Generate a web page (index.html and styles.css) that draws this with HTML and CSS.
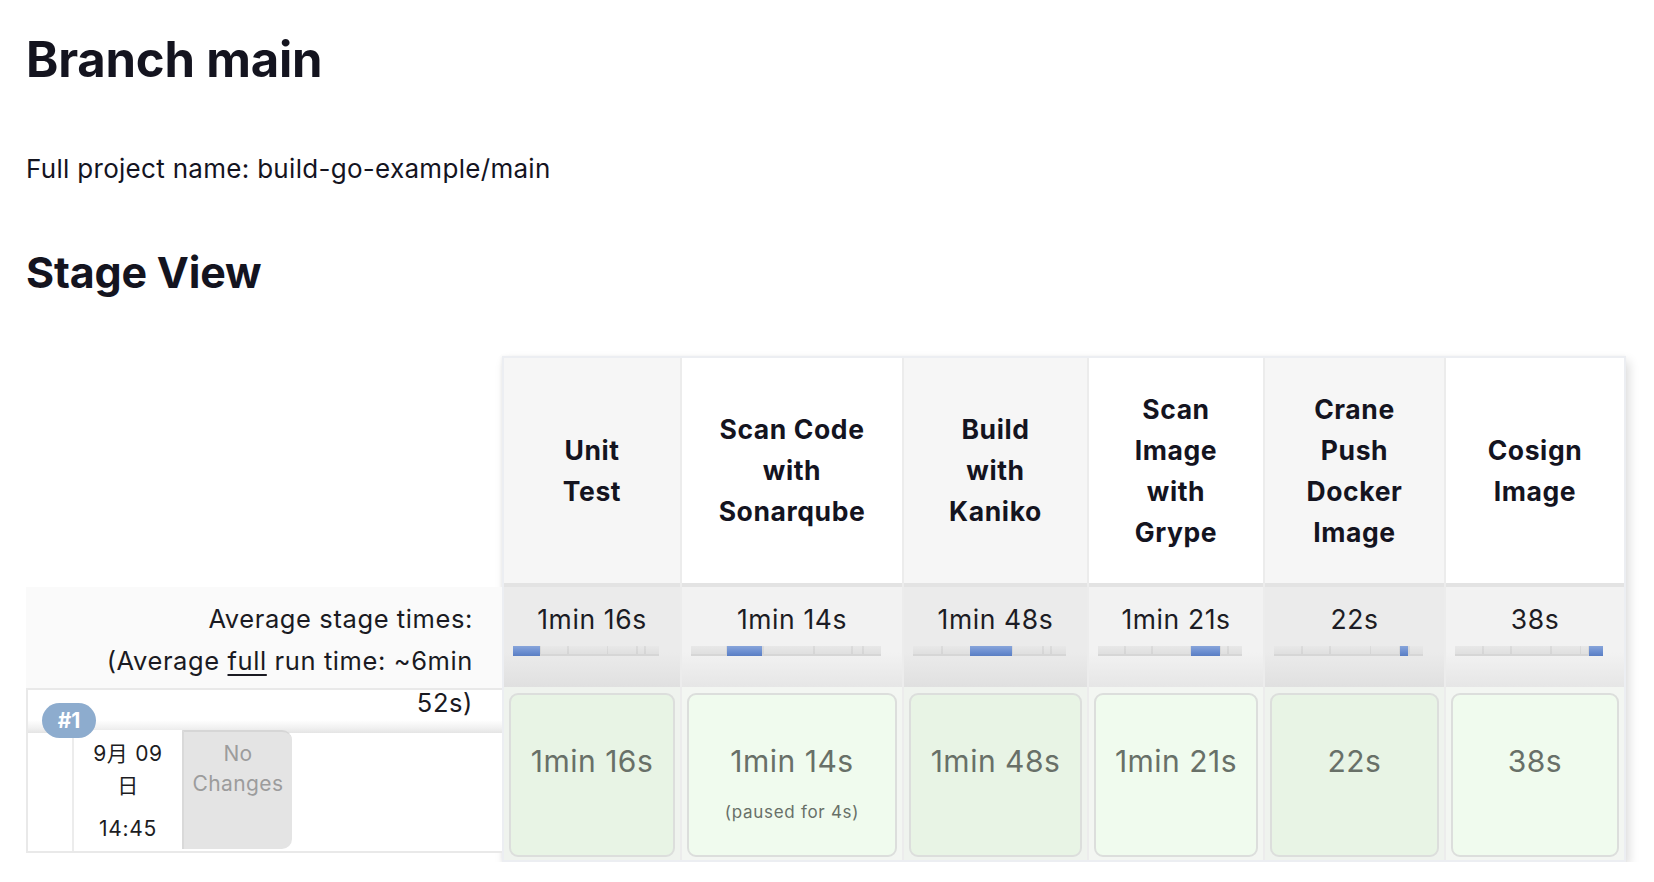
FILE: index.html
```html
<!DOCTYPE html>
<html lang="ja">
<head>
<meta charset="utf-8">
<title>Branch main</title>
<link rel="stylesheet" href="styles.css">
</head>
<body>
<div class="page">
  <h1 class="title">Branch main</h1>
  <p class="fullname">Full project name: build-go-example/main</p>
  <h2 class="section">Stage View</h2>

  <div class="stage-view">
    <div class="runs">
      <div class="runs-spacer"></div>
      <div class="avg-label">Average stage times:<br>(Average <u>full</u> run time: ~6min<br>52s)</div>
      <div class="run-row">
        <div class="run-head"></div>
        <span class="badge">#1</span>
        <div class="run-body">
          <div class="run-date">
            <div class="date-day">9月 09<br>日</div>
            <div class="date-time">14:45</div>
          </div>
          <div class="run-changes">No<br>Changes</div>
        </div>
      </div>
    </div>

    <div class="stages">
      <div class="stage-head odd">Unit<br>Test</div>
      <div class="stage-head">Scan Code<br>with<br>Sonarqube</div>
      <div class="stage-head odd">Build<br>with<br>Kaniko</div>
      <div class="stage-head">Scan<br>Image<br>with<br>Grype</div>
      <div class="stage-head odd">Crane<br>Push<br>Docker<br>Image</div>
      <div class="stage-head">Cosign<br>Image</div>

      <div class="stage-avg odd"><div class="avg-time">1min 16s</div><div class="bar"><span class="bar-fill" style="left:0%;width:18.7%"></span></div></div>
      <div class="stage-avg"><div class="avg-time">1min 14s</div><div class="bar"><span class="bar-fill" style="left:18.7%;width:18.8%"></span></div></div>
      <div class="stage-avg odd"><div class="avg-time">1min 48s</div><div class="bar"><span class="bar-fill" style="left:37.3%;width:27.5%"></span></div></div>
      <div class="stage-avg"><div class="avg-time">1min 21s</div><div class="bar"><span class="bar-fill" style="left:64.5%;width:20.2%"></span></div></div>
      <div class="stage-avg odd"><div class="avg-time">22s</div><div class="bar"><span class="bar-fill" style="left:84.7%;width:5.3%"></span></div></div>
      <div class="stage-avg"><div class="avg-time">38s</div><div class="bar"><span class="bar-fill" style="left:90.5%;width:9.5%"></span></div></div>

      <div class="stage-cell odd"><div class="cell-box"><div class="cell-time">1min 16s</div></div></div>
      <div class="stage-cell"><div class="cell-box"><div class="cell-time">1min 14s</div><div class="cell-note">(paused for 4s)</div></div></div>
      <div class="stage-cell odd"><div class="cell-box"><div class="cell-time">1min 48s</div></div></div>
      <div class="stage-cell"><div class="cell-box"><div class="cell-time">1min 21s</div></div></div>
      <div class="stage-cell odd"><div class="cell-box"><div class="cell-time">22s</div></div></div>
      <div class="stage-cell"><div class="cell-box"><div class="cell-time">38s</div></div></div>
    </div>
  </div>
</div>
</body>
</html>
```

FILE: styles.css
```css
html, body {
  margin: 0;
  padding: 0;
  background: #ffffff;
}

body {
  font-family: Inter, "Noto Sans CJK JP", "Noto Sans", sans-serif;
  color: #14141f;
}

.page {
  padding-left: 26px;
}

.title {
  margin: 30px 0 0;
  font-size: 49px;
  line-height: 60px;
  font-weight: 700;
  letter-spacing: -0.2px;
}

.fullname {
  margin: 61px 0 0;
  font-size: 26px;
  line-height: 36px;
  font-weight: 400;
  letter-spacing: 0.3px;
}

.section {
  margin: 59px 0 0;
  font-size: 43px;
  line-height: 52px;
  font-weight: 700;
  letter-spacing: -0.2px;
}

.stage-view {
  display: flex;
  margin-top: 58px;
}

/* left column */
.runs {
  width: 476px;
  flex: none;
  display: flex;
  flex-direction: column;
}

.runs-spacer {
  height: 231px;
}

.avg-label {
  position: relative;
  z-index: 1;
  height: 101px;
  box-sizing: border-box;
  padding: 11px 29px 0 0;
  background: #fafafa;
  text-align: right;
  font-size: 25.5px;
  line-height: 42px;
  letter-spacing: 0.6px;
  color: #1a1a22;
}

.avg-label u {
  text-underline-offset: 4px;
}

.run-row {
  position: relative;
  height: 165px;
  box-sizing: border-box;
  border: 2px solid #e9e9e9;
  border-right: none;
  background: #ffffff;
}

.run-head {
  height: 43px;
  background: linear-gradient(to bottom, #ffffff 0%, #ffffff 70%, #f1f1f1 88%, #e4e4e4 100%);
}

.badge {
  position: absolute;
  left: 14px;
  top: 13px;
  width: 54px;
  height: 35px;
  border-radius: 18px;
  background: #8dacce;
  color: #ffffff;
  font-size: 21px;
  font-weight: 700;
  line-height: 35px;
  text-align: center;
}

.run-body {
  display: flex;
  height: 118px;
  padding-left: 44px;
}

.run-date {
  width: 110px;
  margin-top: -3px;
  box-sizing: border-box;
  border-left: 2px solid #ececec;
  background: #ffffff;
  text-align: center;
  font-size: 21px;
  color: #1c1c22;
  letter-spacing: 0.7px;
}

.date-day {
  padding-top: 8px;
  line-height: 32px;
}

.date-time {
  margin-top: 11px;
  line-height: 32px;
}

.run-changes {
  width: 110px;
  margin-top: -3px;
  margin-bottom: 2px;
  box-sizing: border-box;
  padding-top: 7px;
  background: #e4e4e4;
  border-left: 2px solid #d9d9d9;
  border-top: 2px solid #d6d6d6;
  border-radius: 0 10px 10px 0;
  color: #9c9c9c;
  text-align: center;
  font-size: 21px;
  line-height: 30px;
  letter-spacing: 0.4px;
}

/* stage table */
.stages {
  display: grid;
  grid-template-columns: 176px 220px 183px 174px 179px 178px;
  grid-template-rows: 225px 104px 173px;
  column-gap: 2px;
  border: 2px solid #eceef2;
  background: #ececec;
  box-shadow: 3px 5px 10px rgba(0, 0, 0, 0.14), -1px 0 3px rgba(0, 0, 0, 0.04);
}

.stage-head {
  display: flex;
  align-items: center;
  justify-content: center;
  text-align: center;
  background: #ffffff;
  font-size: 26.5px;
  line-height: 41px;
  font-weight: 700;
  letter-spacing: 0.6px;
  color: #14141f;
}

.stage-head.odd {
  background: #f6f6f6;
}

.stage-avg {
  box-sizing: border-box;
  border-top: 4px solid #e3e3e3;
  background: linear-gradient(to bottom, #f2f2f2 0%, #f2f2f2 65%, #e6e6e6 100%);
  padding: 17px 21px 0 9px;
}

.stage-avg.odd {
  background: linear-gradient(to bottom, #ebebeb 0%, #ebebeb 65%, #e0e0e0 100%);
}

.avg-time {
  text-align: center;
  padding-left: 12px;
  font-size: 26.5px;
  line-height: 30px;
  letter-spacing: 0.6px;
  color: #1c1c24;
}

.bar {
  position: relative;
  margin-top: 12px;
  height: 10px;
  background-color: #e3e3e3;
  background-image:
    linear-gradient(90deg,
      transparent 18.3%, rgba(0,0,0,0.05) 18.3%, rgba(0,0,0,0.05) 19.5%,
      transparent 19.5%, transparent 37%, rgba(0,0,0,0.05) 37%, rgba(0,0,0,0.05) 38.2%,
      transparent 38.2%, transparent 64.2%, rgba(0,0,0,0.05) 64.2%, rgba(0,0,0,0.05) 65.4%,
      transparent 65.4%, transparent 84.2%, rgba(0,0,0,0.05) 84.2%, rgba(0,0,0,0.05) 85.4%,
      transparent 85.4%, transparent 89.8%, rgba(0,0,0,0.05) 89.8%, rgba(0,0,0,0.05) 91%,
      transparent 91%),
    linear-gradient(to bottom, #e8e8e8, #dddddd);
  box-shadow: inset 0 -2px 0 #d6d6d6;
}

.bar-fill {
  position: absolute;
  top: 0;
  height: 10px;
  background: linear-gradient(to bottom, #88a5da 0%, #6a8dd0 60%, #5a7ec2 100%);
}

.stage-cell {
  box-sizing: border-box;
  padding: 6px 5px 3px;
  background: #f3f6f2;
}

.stage-cell.odd {
  background: #eff3ee;
}

.cell-box {
  height: 100%;
  box-sizing: border-box;
  border: 2px solid #dcdedc;
  border-radius: 9px;
  background: #f0fbee;
  text-align: center;
  padding-top: 47px;
  color: #687068;
}

.stage-cell.odd .cell-box {
  background: #e8f4e5;
}

.cell-time {
  font-size: 30px;
  line-height: 38px;
  letter-spacing: 0.5px;
}

.cell-note {
  margin-top: 21px;
  font-size: 17px;
  line-height: 22px;
  letter-spacing: 0.7px;
}
```
